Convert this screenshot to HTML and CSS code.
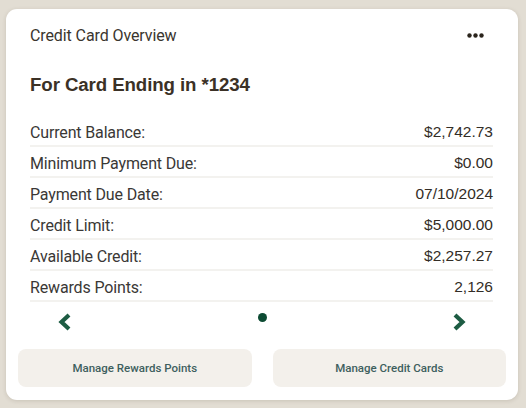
FILE: index.html
```html
<!DOCTYPE html>
<html lang="en">
<head>
    <meta charset="UTF-8">
    <meta name="viewport" content="width=device-width, initial-scale=1.0">
    <title>Credit Card Overview</title>
    <link rel="stylesheet" href="styles.css">
</head>
<body>
    <div class="card">
        <div class="card-header">
            <span class="card-title">Credit Card Overview</span>
            <button class="more-button" aria-label="More options">
                <svg width="17" height="5" viewBox="0 0 17 5">
                    <circle cx="2.5" cy="2.5" r="2.2" fill="#2a241c"/>
                    <circle cx="8.5" cy="2.5" r="2.2" fill="#2a241c"/>
                    <circle cx="14.5" cy="2.5" r="2.2" fill="#2a241c"/>
                </svg>
            </button>
        </div>

        <h2 class="card-ending">For Card Ending in *1234</h2>

        <div class="details">
            <div class="row"><span class="label">Current Balance:</span><span class="value">$2,742.73</span></div>
            <div class="row"><span class="label">Minimum Payment Due:</span><span class="value">$0.00</span></div>
            <div class="row"><span class="label">Payment Due Date:</span><span class="value">07/10/2024</span></div>
            <div class="row"><span class="label">Credit Limit:</span><span class="value">$5,000.00</span></div>
            <div class="row"><span class="label">Available Credit:</span><span class="value">$2,257.27</span></div>
            <div class="row"><span class="label">Rewards Points:</span><span class="value">2,126</span></div>
        </div>

        <div class="pager">
            <button class="arrow" aria-label="Previous card">
                <svg width="16" height="18" viewBox="0 0 16 18">
                    <path d="M12 2 L4.5 9 L12 16" fill="none" stroke="#1d5c43" stroke-width="4.2"/>
                </svg>
            </button>
            <span class="dot"></span>
            <button class="arrow" aria-label="Next card">
                <svg width="16" height="18" viewBox="0 0 16 18">
                    <path d="M4 2 L11.5 9 L4 16" fill="none" stroke="#1d5c43" stroke-width="4.2"/>
                </svg>
            </button>
        </div>

        <div class="actions">
            <button class="action">Manage Rewards Points</button>
            <button class="action">Manage Credit Cards</button>
        </div>
    </div>
</body>
</html>
```

FILE: styles.css
```css
body {
    margin: 0;
    background-color: #e2ddd3;
    font-family: Roboto, sans-serif;
}

.card {
    margin: 9px 8px 8px 6px;
    height: 391px;
    box-sizing: border-box;
    background-color: #fff;
    border-radius: 11px;
    box-shadow: 0 1px 4px rgba(60, 50, 30, 0.15);
    padding: 16px 12px 13px 12px;
    display: flex;
    flex-direction: column;
}

.card-header {
    display: flex;
    justify-content: space-between;
    align-items: center;
    padding: 0 22px 0 12px;
    height: 20px;
}

.card-title {
    font-size: 16px;
    color: #3a352e;
    letter-spacing: -0.1px;
}

.more-button {
    background: none;
    border: none;
    padding: 0;
    display: flex;
    cursor: pointer;
}

.card-ending {
    font-family: "Liberation Sans", Arial, sans-serif;
    font-size: 18.7px;
    font-weight: bold;
    color: #3b3126;
    margin: 29px 0 0 12px;
    line-height: 22px;
    letter-spacing: -0.1px;
}

.details {
    margin: 20px 13px 0 12px;
}

.row {
    display: flex;
    justify-content: space-between;
    align-items: center;
    height: 31px;
    box-sizing: border-box;
    padding-top: 3px;
    border-bottom: 2px solid #f3f2ef;
}

.label {
    font-size: 16px;
    color: #3a3836;
    letter-spacing: -0.15px;
}

.value {
    font-family: "Liberation Sans", Arial, sans-serif;
    font-size: 15.5px;
    color: #332d26;
}

.pager {
    display: flex;
    justify-content: space-between;
    align-items: flex-start;
    padding: 7px 39px 0 39px;
    height: 32px;
}

.arrow {
    background: none;
    border: none;
    padding: 4px 0 0 0;
    display: flex;
    cursor: pointer;
}

.dot {
    width: 9px;
    height: 9px;
    border-radius: 50%;
    background-color: #0d4b33;
    margin-top: 4px;
}

.actions {
    display: grid;
    grid-template-columns: 1fr 1fr;
    gap: 21px;
    margin-top: auto;
}

.action {
    height: 38px;
    border: none;
    border-radius: 8px;
    background-color: #f3f0eb;
    font-family: Roboto, sans-serif;
    font-size: 11.5px;
    font-weight: 500;
    color: #3e5f5e;
    cursor: pointer;
}
```
